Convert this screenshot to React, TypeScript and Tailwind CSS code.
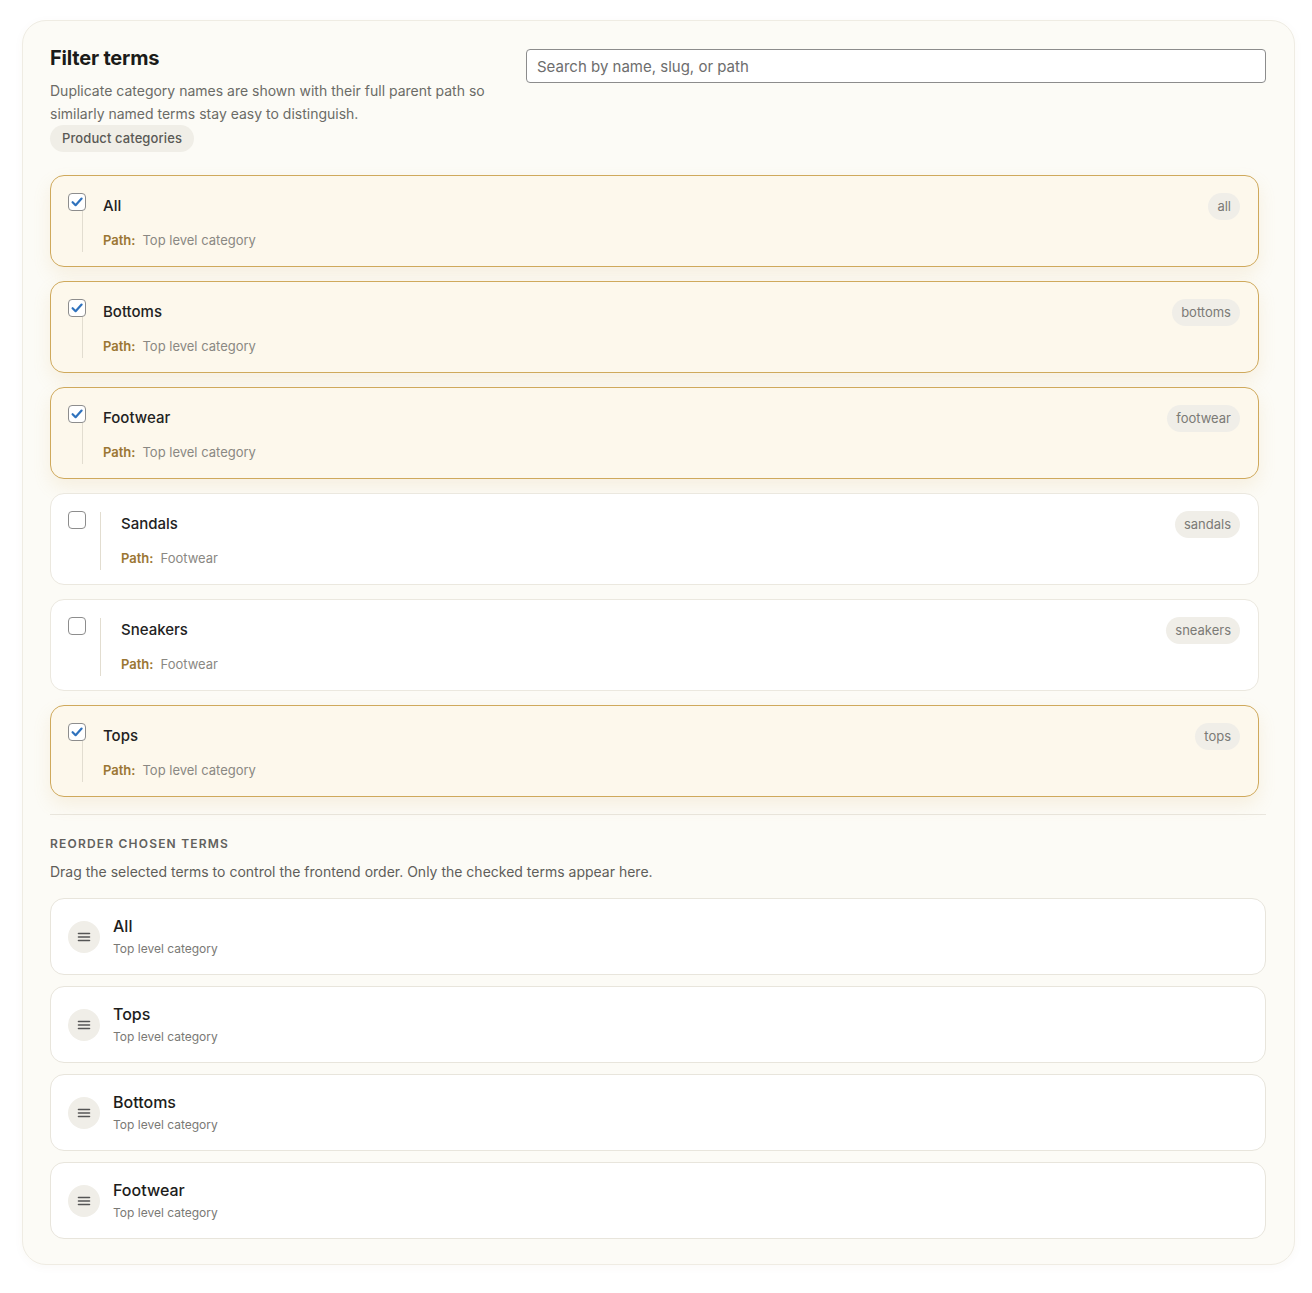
import { useState } from "react";

type Term = {
  id: number;
  name: string;
  slug: string;
  path: string;
  depth: number;
};

const terms: Term[] = [
  { id: 1, name: "All", slug: "all", path: "Top level category", depth: 0 },
  { id: 2, name: "Bottoms", slug: "bottoms", path: "Top level category", depth: 0 },
  { id: 3, name: "Footwear", slug: "footwear", path: "Top level category", depth: 0 },
  { id: 4, name: "Sandals", slug: "sandals", path: "Footwear", depth: 1 },
  { id: 5, name: "Sneakers", slug: "sneakers", path: "Footwear", depth: 1 },
  { id: 6, name: "Tops", slug: "tops", path: "Top level category", depth: 0 },
];

const Checkbox = ({ checked }: { checked: boolean }) => (
  <span className="absolute left-[17px] top-[17px] flex h-[18px] w-[18px] items-center justify-center rounded-[4px] border border-[#8d8d8d] bg-white">
    {checked && (
      <svg width="14" height="14" viewBox="0 0 14 14" fill="none">
        <path
          d="M2.6 7.2 5.6 10.2 11.6 3.6"
          stroke="#2f72bd"
          strokeWidth="2.2"
          strokeLinecap="round"
          strokeLinejoin="round"
        />
      </svg>
    )}
  </span>
);

const DragHandle = () => (
  <span className="flex h-8 w-8 shrink-0 items-center justify-center rounded-full bg-[#f0eee8]">
    <svg width="14" height="14" viewBox="0 0 14 14" fill="none">
      <path
        d="M1.5 3.5h11M1.5 7h11M1.5 10.5h11"
        stroke="#555"
        strokeWidth="1.6"
        strokeLinecap="round"
      />
    </svg>
  </span>
);

const App = () => {
  const [selected] = useState<number[]>([1, 2, 3, 6]);
  const order = [1, 6, 2, 3];

  return (
    <div className="min-h-[1293px] bg-white font-['Inter',sans-serif] text-[#1d1d1b]">
      <div className="ml-[22px] mt-5 w-[1273px] rounded-[24px] border border-[#efece3] bg-[#fcfbf6] pb-[25px] pl-[27px] pr-[28px] pt-[25px] shadow-[0_2px_10px_rgba(120,100,60,0.04)]">
        <div className="flex gap-6">
          <div className="w-[452px]">
            <h2 className="text-[20px] font-bold leading-6 tracking-[-0.2px] text-[#1b1b19]">
              Filter terms
            </h2>
            <p className="mt-[9px] text-[14px] leading-[23px] text-[#6b6b66]">
              Duplicate category names are shown with their full parent path so
              similarly named terms stay easy to distinguish.
            </p>
            <span className="inline-flex h-[27px] items-center rounded-full bg-[#f0eee7] px-[12px] text-[13px] font-medium tracking-[0.1px] text-[#5a5955]">
              Product categories
            </span>
          </div>
          <input
            className="mt-[3px] h-[34px] flex-1 rounded-[4px] border border-[#8c8c8c] bg-white px-[10px] text-[15px] text-[#333] outline-none placeholder:text-[#6d6d6d]"
            placeholder="Search by name, slug, or path"
          />
        </div>

        <div className="mt-[23px] flex flex-col gap-3.5 pr-[7px]">
          {terms.map((term) => {
            const isOn = selected.includes(term.id);
            return (
              <div
                key={term.id}
                className={
                  isOn
                    ? "relative flex items-start justify-between rounded-[14px] border border-[#cfa95c] bg-[#fdf8ec] pb-[14px] pl-[31px] pr-[18px] pt-[18px] shadow-[0_8px_18px_rgba(214,170,90,0.14)]"
                    : "relative flex items-start justify-between rounded-[14px] border border-[#ebe8df] bg-white pb-[14px] pl-[31px] pr-[18px] pt-[18px]"
                }
              >
                <Checkbox checked={isOn} />
                <div
                  className={
                    term.depth > 0
                      ? "ml-[18px] border-l border-[#e2ddd0] py-0.5 pl-5"
                      : "border-l border-[#e2ddd0] py-0.5 pl-5"
                  }
                >
                  <p className="text-[15px] font-medium leading-5 text-[#222]">
                    {term.name}
                  </p>
                  <p className="mt-3.5 text-[13px] leading-5 text-[#8a8883]">
                    <span className="font-semibold text-[#9b7633]">Path:</span>
                    <span className="ml-[7px]">{term.path}</span>
                  </p>
                </div>
                <span className="-mt-px inline-flex h-[27px] items-center rounded-full bg-[#f0eee8] px-[9px] text-[13px] text-[#7b7a76]">
                  {term.slug}
                </span>
              </div>
            );
          })}
        </div>

        <div className="mt-[17px] border-t border-[#e9e6de] pt-[21px]">
          <h3 className="text-[12px] font-semibold uppercase leading-4 tracking-[1.2px] text-[#62615d]">
            Reorder chosen terms
          </h3>
          <p className="mt-[10px] text-[14px] leading-5 text-[#5f5e5a]">
            Drag the selected terms to control the frontend order. Only the
            checked terms appear here.
          </p>
          <div className="mt-[16px] flex flex-col gap-[11px]">
            {order.map((id) => {
              const term = terms.find((t) => t.id === id)!;
              return (
                <div
                  key={id}
                  className="flex h-[77px] items-center gap-[13px] rounded-[14px] border border-[#e8e5dc] bg-white pl-[17px]"
                >
                  <DragHandle />
                  <div className="flex flex-col">
                    <p className="text-[16px] font-medium leading-5 text-[#1d1d1b]">
                      {term.name}
                    </p>
                    <p className="mt-[5px] text-[12px] leading-4 text-[#7a7975]">
                      {term.path}
                    </p>
                  </div>
                </div>
              );
            })}
          </div>
        </div>
      </div>
    </div>
  );
};

export default App;
